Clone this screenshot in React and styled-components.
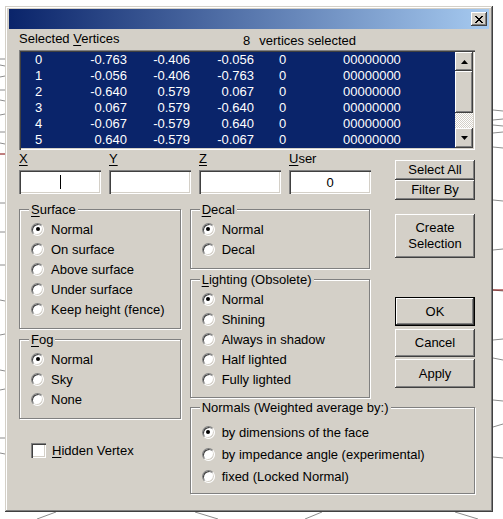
import React from 'react';
import styled, { createGlobalStyle } from 'styled-components';

const GlobalStyle = createGlobalStyle`
  html, body { margin: 0; padding: 0; background: #fff; }
  body { font-family: "Liberation Sans", Arial, sans-serif; font-size: 13px; color: #000; }
  #root { position: relative; width: 503px; height: 519px; overflow: hidden; }
  u { text-decoration: underline; text-underline-offset: 2px; }
`;

const Backdrop = styled.svg`
  position: absolute;
  left: 0;
  top: 0;
`;

const Dialog = styled.div`
  position: relative;
  margin: 6px 0 0 5px;
  width: 488px;
  height: 506px;
  box-sizing: border-box;
  background: #d4d0c8;
  padding: 3px 4px;
  box-shadow: inset -1px -1px #404040, inset 1px 1px #d4d0c8, inset -2px -2px #808080, inset 2px 2px #fff;
`;

const TitleBar = styled.div`
  height: 20px;
  background: linear-gradient(to right, #0a246a, #a6caf0);
  display: flex;
  align-items: center;
  justify-content: flex-end;
  padding-right: 2px;
`;

const raised = `
  background: #d4d0c8;
  box-shadow: inset -1px -1px #404040, inset 1px 1px #fff, inset -2px -2px #808080, inset 2px 2px #d4d0c8;
`;

const CloseButton = styled.div`
  width: 16px;
  height: 14px;
  ${raised}
  display: flex;
  align-items: center;
  justify-content: center;
`;

const Body = styled.div`
  padding: 0 14px 0 10px;
`;

const Header = styled.div`
  height: 21px;
  display: grid;
  grid-template-columns: 224px auto;
  align-items: start;
  padding-top: 2px;
  box-sizing: border-box;
  line-height: 15px;
`;

const Count = styled.div`
  display: flex;
  gap: 9px;
  margin-top: 2px;
`;

const sunken = `
  box-shadow: inset 1px 1px #808080, inset 2px 2px #404040, inset -1px -1px #fff, inset -2px -2px #d4d0c8;
`;

const ListBox = styled.div`
  height: 100px;
  box-sizing: border-box;
  padding: 2px;
  background: #0a246a;
  ${sunken}
  display: flex;
`;

const Rows = styled.div`
  flex: 1;
  color: #fff;
`;

const Row = styled.div`
  display: grid;
  grid-template-columns: 14px 30px 62px 63px 64px 25px 64px auto;
  height: 16px;
  line-height: 16px;
`;

const Cell = styled.span`
  text-align: ${p => (p.$right ? 'right' : 'left')};
`;

const ScrollBar = styled.div`
  width: 18px;
  display: flex;
  flex-direction: column;
  background: #d4d0c8;
`;

const ScrollBtn = styled.div`
  height: ${p => p.$h}px;
  ${raised}
  display: flex;
  align-items: center;
  justify-content: center;
`;

const Track = styled.div`
  flex: 1;
  background: repeating-conic-gradient(#fff 0 25%, #d4d0c8 0 50%) 0 0 / 2px 2px;
`;

const FieldsRow = styled.div`
  height: 50px;
  display: flex;
  justify-content: space-between;
`;

const Fields = styled.div`
  display: flex;
  gap: 8px;
  padding-top: 1px;
`;

const Field = styled.div`
  width: 82px;
  display: flex;
  flex-direction: column;
  gap: 4px;
  line-height: 15px;
`;

const TextBox = styled.div`
  height: 24px;
  box-sizing: border-box;
  background: #fff;
  ${sunken}
  display: flex;
  align-items: center;
  justify-content: center;
`;

const Caret = styled.span`
  width: 1px;
  height: 14px;
  background: #000;
`;

const ButtonStack = styled.div`
  width: 80px;
  padding-top: 10px;
  display: flex;
  flex-direction: column;
`;

const Button = styled.div`
  width: 80px;
  height: ${p => p.$h}px;
  margin-top: ${p => p.$mt || 0}px;
  box-sizing: border-box;
  ${raised}
  display: flex;
  align-items: center;
  justify-content: center;
  text-align: center;
  line-height: 16px;
  ${p => p.$default && `
    border: 1px solid #000;
    box-shadow: inset -1px -1px #404040, inset 1px 1px #fff, inset -2px -2px #808080, inset 2px 2px #d4d0c8;
  `}
`;

const Lower = styled.div`
  display: flex;
  gap: 9px;
  padding-top: 9px;
`;

const Column = styled.div`
  width: ${p => p.$w}px;
  display: flex;
  flex-direction: column;
  gap: ${p => p.$gap || 0}px;
`;

const TopRight = styled.div`
  display: flex;
  justify-content: space-between;
`;

const Group = styled.div`
  position: relative;
  height: ${p => p.$h}px;
  box-sizing: border-box;
  border: 1px solid #808080;
  box-shadow: inset 1px 1px #fff, 1px 1px #fff;
  padding: ${p => p.$pt || 9}px 0 0 11px;
  margin-top: ${p => p.$mt || 0}px;
`;

const Legend = styled.span`
  position: absolute;
  top: -8px;
  left: 9px;
  padding: 0 2px;
  background: #d4d0c8;
  line-height: 15px;
  white-space: nowrap;
`;

const Option = styled.div`
  height: ${p => p.$h || 20}px;
  display: flex;
  align-items: center;
  gap: 7px;
  white-space: nowrap;
`;

const RadioDot = styled.span`
  position: relative;
  width: 13px;
  height: 13px;
  box-sizing: border-box;
  border-radius: 50%;
  background: #fff;
  border: 1px solid;
  border-color: #808080 #fff #fff #808080;
  box-shadow: inset 1px 1px #404040, inset -1px -1px #d4d0c8;
  flex: none;
  &::after {
    content: '';
    display: ${p => (p.$on ? 'block' : 'none')};
    position: absolute;
    left: 3.5px;
    top: 3.5px;
    width: 4px;
    height: 4px;
    border-radius: 50%;
    background: #000;
  }
`;

const CheckRow = styled.div`
  margin-top: 24px;
  padding-left: 12px;
  display: flex;
  align-items: center;
  gap: 6px;
`;

const CheckBox = styled.span`
  width: 15px;
  height: 15px;
  box-sizing: border-box;
  background: #fff;
  ${sunken}
`;

const rows = [
  ['0', '-0.763', '-0.406', '-0.056'],
  ['1', '-0.056', '-0.406', '-0.763'],
  ['2', '-0.640', '0.579', '0.067'],
  ['3', '0.067', '0.579', '-0.640'],
  ['4', '-0.067', '-0.579', '0.640'],
  ['5', '0.640', '-0.579', '-0.067'],
];

const Radio = ({ on, children, h }) => (
  <Option $h={h}>
    <RadioDot $on={on} />
    <span>{children}</span>
  </Option>
);

const Ul = ({ k, rest }) => (
  <span><u>{k}</u>{rest}</span>
);

const bgLines = [
  [0, 59, 5, 59], [0, 65, 5, 66], [0, 77, 5, 76], [0, 90, 5, 90], [0, 100, 5, 101],
  [0, 115, 5, 114], [0, 132, 5, 132], [0, 143, 5, 144], [0, 203, 5, 203], [0, 232, 5, 232],
  [0, 265, 5, 265], [0, 300, 5, 301], [0, 335, 5, 334], [0, 370, 5, 371], [0, 390, 5, 389],
  [0, 438, 5, 438], [0, 453, 5, 454],
  [493, 110, 503, 111], [493, 120, 503, 119], [493, 125, 503, 126], [493, 133, 503, 132],
  [493, 147, 503, 148], [493, 200, 503, 201], [493, 250, 503, 249], [493, 290, 503, 291],
  [493, 340, 503, 339], [493, 358, 503, 360], [493, 400, 503, 401], [493, 427, 503, 424],
  [493, 457, 503, 458],
  [37, 519, 56, 512], [195, 512, 218, 519], [305, 519, 322, 512], [455, 512, 478, 519],
];

export default function App() {
  return (
    <>
      <GlobalStyle />
      <Backdrop width="503" height="519" viewBox="0 0 503 519">
        {bgLines.map((l, i) => (
          <line key={i} x1={l[0]} y1={l[1]} x2={l[2]} y2={l[3]} stroke="#8c8c8c" strokeWidth="1" />
        ))}
        <line x1="0" y1="154" x2="5" y2="154" stroke="#800000" strokeWidth="1" />
        <line x1="493" y1="290" x2="503" y2="290" stroke="#800000" strokeWidth="1" />
      </Backdrop>
      <Dialog>
        <TitleBar>
          <CloseButton>
            <svg width="8" height="7" viewBox="0 0 8 7" shapeRendering="crispEdges">
              <path d="M0 0h2v1H0zM6 0h2v1H6zM1 1h2v1H1zM5 1h2v1H5zM2 2h4v1H2zM3 3h2v1H3zM2 4h4v1H2zM1 5h2v1H1zM5 5h2v1H5zM0 6h2v1H0zM6 6h2v1H6z" fill="#000" />
            </svg>
          </CloseButton>
        </TitleBar>
        <Body>
          <Header>
            <span>Selected <u>V</u>ertices</span>
            <Count><span>8</span><span>vertices selected</span></Count>
          </Header>
          <ListBox>
            <Rows>
              {rows.map(r => (
                <Row key={r[0]}>
                  <span />
                  <Cell>{r[0]}</Cell>
                  <Cell $right>{r[1]}</Cell>
                  <Cell $right>{r[2]}</Cell>
                  <Cell $right>{r[3]}</Cell>
                  <span />
                  <Cell>0</Cell>
                  <Cell>00000000</Cell>
                </Row>
              ))}
            </Rows>
            <ScrollBar>
              <ScrollBtn $h={19}>
                <svg width="7" height="4" viewBox="0 0 7 4"><path d="M3.5 0L7 4H0z" fill="#000" /></svg>
              </ScrollBtn>
              <ScrollBtn $h={42} />
              <Track />
              <ScrollBtn $h={20}>
                <svg width="7" height="4" viewBox="0 0 7 4"><path d="M0 0h7L3.5 4z" fill="#000" /></svg>
              </ScrollBtn>
            </ScrollBar>
          </ListBox>
          <FieldsRow>
            <Fields>
              <Field><Ul k="X" rest="" /><TextBox><Caret /></TextBox></Field>
              <Field><Ul k="Y" rest="" /><TextBox /></Field>
              <Field><Ul k="Z" rest="" /><TextBox /></Field>
              <Field><Ul k="U" rest="ser" /><TextBox>0</TextBox></Field>
            </Fields>
            <ButtonStack>
              <Button $h={20}>Select All</Button>
              <Button $h={20}>Filter By</Button>
            </ButtonStack>
          </FieldsRow>
          <Lower>
            <Column $w={162}>
              <Group $h={120}>
                <Legend><Ul k="S" rest="urface" /></Legend>
                <Radio on>Normal</Radio>
                <Radio>On surface</Radio>
                <Radio>Above surface</Radio>
                <Radio>Under surface</Radio>
                <Radio>Keep height (fence)</Radio>
              </Group>
              <Group $h={80} $mt={10}>
                <Legend><Ul k="F" rest="og" /></Legend>
                <Radio on>Normal</Radio>
                <Radio>Sky</Radio>
                <Radio>None</Radio>
              </Group>
              <CheckRow>
                <CheckBox />
                <Ul k="H" rest="idden Vertex" />
              </CheckRow>
            </Column>
            <Column $w={286}>
              <TopRight>
                <Column $w={180}>
                  <Group $h={60}>
                    <Legend><Ul k="D" rest="ecal" /></Legend>
                    <Radio on>Normal</Radio>
                    <Radio>Decal</Radio>
                  </Group>
                  <Group $h={119} $mt={10}>
                    <Legend><Ul k="L" rest="ighting (Obsolete)" /></Legend>
                    <Radio on>Normal</Radio>
                    <Radio>Shining</Radio>
                    <Radio>Always in shadow</Radio>
                    <Radio>Half lighted</Radio>
                    <Radio>Fully lighted</Radio>
                  </Group>
                </Column>
                <Column $w={80}>
                  <Button $h={44} $mt={5}>Create<br />Selection</Button>
                  <Button $h={29} $mt={39} $default>OK</Button>
                  <Button $h={28} $mt={3}>Cancel</Button>
                  <Button $h={29} $mt={2}>Apply</Button>
                </Column>
              </TopRight>
              <Group $h={87} $mt={9} $pt={13}>
                <Legend>Normals (Weighted average by:)</Legend>
                <Radio on h={22}>by dimensions of the face</Radio>
                <Radio h={22}>by impedance angle (experimental)</Radio>
                <Radio h={22}>fixed (Locked Normal)</Radio>
              </Group>
            </Column>
          </Lower>
        </Body>
      </Dialog>
    </>
  );
}
